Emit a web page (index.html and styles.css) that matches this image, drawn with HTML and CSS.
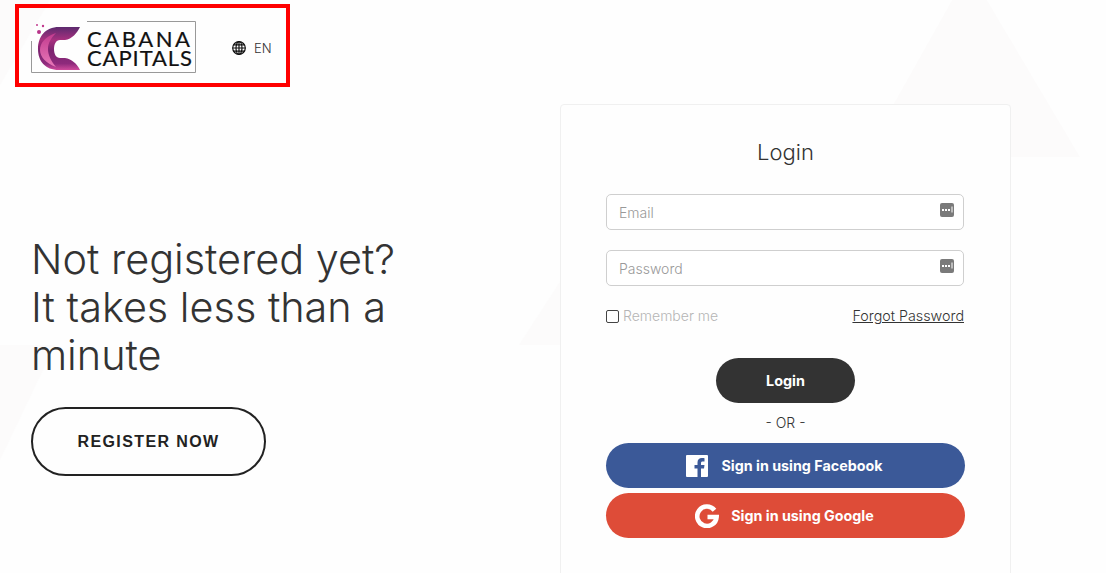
FILE: index.html
```html
<!DOCTYPE html>
<html lang="en">
<head>
    <meta charset="UTF-8">
    <meta name="viewport" content="width=device-width, initial-scale=1.0">
    <title>Login</title>
    <link rel="stylesheet" href="styles.css">
</head>
<body>
    <!-- faint background triangles -->
    <svg class="bg-shapes" width="1106" height="573" viewBox="0 0 1106 573" aria-hidden="true">
        <polygon points="969,-30 1080,157 864,157"></polygon>
        <polygon points="519,345 600,220 600,345"></polygon>
        <polygon points="0,345 55,345 0,460"></polygon>
        <polygon points="0,0 50,0 0,85"></polygon>
    </svg>

    <header class="top-box">
        <a href="#" class="logo">
            <svg width="165" height="52" viewBox="0 0 165 52">
                <defs>
                    <linearGradient id="logoFill" x1="0" y1="0" x2="0" y2="1">
                        <stop offset="0" stop-color="#5c2a6e"></stop>
                        <stop offset="0.3" stop-color="#a8307f"></stop>
                        <stop offset="0.55" stop-color="#7c2470"></stop>
                        <stop offset="0.85" stop-color="#8e2a7c"></stop>
                        <stop offset="1" stop-color="#d04a9c"></stop>
                    </linearGradient>
                    <linearGradient id="logoShine" x1="0" y1="0" x2="0" y2="1">
                        <stop offset="0" stop-color="#c23a8e"></stop>
                        <stop offset="1" stop-color="#e878b8"></stop>
                    </linearGradient>
                </defs>
                <path class="logo-frame" d="M56 .5H164.5V51.5H.5V20"></path>
                <circle cx="6" cy="4" r="1" fill="#c23a8e"></circle>
                <circle cx="12" cy="5" r="1.2" fill="#c23a8e"></circle>
                <circle cx="8" cy="11" r="2" fill="#b8348a"></circle>
                <path fill="url(#logoFill)" d="M49 6H28C14 6 7 16 7 28C7 40 14 49 28 49H49C46 43 41 38 34 37H29C25 37 23 33 23 28C23 23 25 19 29 19H34C41 18 46 12 49 6Z"></path>
                <path fill="url(#logoShine)" d="M25 12C14 16 9 22 9 29C9 36 15 42 25 46C20 40 17 34 17 28C17 22 20 17 25 12Z"></path>
                <text class="logo-text" x="56" y="26" textLength="103">CABANA</text>
                <text class="logo-text" x="56" y="45" textLength="105">CAPITALS</text>
            </svg>
        </a>
        <a href="#" class="lang">
            <svg width="14" height="14" viewBox="0 0 14 14" fill="none" stroke="#111" stroke-width="1.2">
                <circle cx="7" cy="7" r="6.3"></circle>
                <ellipse cx="7" cy="7" rx="3" ry="6.3"></ellipse>
                <path d="M7 .7V13.3M.7 7H13.3M1.6 3.800H12.400M1.600 10.200H12.400"></path>
            </svg>
            <span>EN</span>
        </a>
    </header>

    <main class="content">
        <section class="intro">
            <h1>Not registered yet?<br>It takes less than a<br>minute</h1>
            <a href="#" class="register-btn">REGISTER NOW</a>
        </section>

        <section class="card">
            <h2>Login</h2>
            <form class="login-form">
                <div class="field">
                    <input type="text" placeholder="Email">
                    <svg class="field-icon" width="14" height="14" viewBox="0 0 14 14">
                        <rect width="14" height="14" rx="2" fill="#7a7a7a"></rect>
                        <path d="M2 6h2v2H2zM5 6h2v2H5zM8 6h2v2H8z" fill="#fff"></path>
                        <path d="M12 3.5v6" stroke="#fff" stroke-width="1"></path>
                    </svg>
                </div>
                <div class="field">
                    <input type="password" placeholder="Password">
                    <svg class="field-icon" width="14" height="14" viewBox="0 0 14 14">
                        <rect width="14" height="14" rx="2" fill="#7a7a7a"></rect>
                        <path d="M2 6h2v2H2zM5 6h2v2H5zM8 6h2v2H8z" fill="#fff"></path>
                        <path d="M12 3.5v6" stroke="#fff" stroke-width="1"></path>
                    </svg>
                </div>
                <div class="form-row">
                    <label class="remember"><span class="check"></span>Remember me</label>
                    <a href="#" class="forgot">Forgot Password</a>
                </div>
                <button type="button" class="login-btn">Login</button>
                <p class="or">- OR -</p>
                <a href="#" class="social facebook">
                    <svg width="22" height="22" viewBox="0 0 22 22">
                        <path fill="#fff" d="M1 0H21A1 1 0 0 1 22 1V21A1 1 0 0 1 21 22H15V13.5H18L18.5 10H15V8C15 7 15.5 6.4 16.700 6.400H18.500V3.200C18 3.100 17 3 15.800 3C13.200 3 11.500 4.600 11.500 7.500V10H8.500V13.500H11.500V22H1A1 1 0 0 1 0 21V1A1 1 0 0 1 1 0Z"></path>
                    </svg>
                    <span>Sign in using Facebook</span>
                </a>
                <a href="#" class="social google">
                    <svg width="24" height="24" viewBox="0 0 24 24">
                        <path fill="none" stroke="#fff" stroke-width="4.6" d="M19.500 6.200A9.700 9.700 0 1 0 21.600 13H12.500"></path>
                    </svg>
                    <span>Sign in using Google</span>
                </a>
            </form>
        </section>
    </main>
</body>
</html>
```

FILE: styles.css
```css
html, body {
    height: 100%;
    overflow: hidden;
}
body {
    margin: 0;
    padding: 0;
    background-color: #FEFEFE;
    font-family: Inter, sans-serif;
    color: #333;
}
a {
    color: inherit;
    text-decoration: none;
}
.bg-shapes {
    position: absolute;
    top: 0;
    left: 0;
    fill: #FCFBFB;
}
.top-box {
    position: relative;
    box-sizing: border-box;
    width: 275px;
    height: 83px;
    margin: 4px 0 0 15px;
    border: 4px solid #FF0000;
    padding: 13px 0 0 12px;
    display: flex;
    gap: 36px;
}
.logo {
    display: block;
    height: 52px;
}
.logo-frame {
    fill: none;
    stroke: #999;
    stroke-width: 1;
}
.logo-text {
    font-family: Lato, sans-serif;
    font-size: 22px;
    fill: #111;
    stroke: #111;
    stroke-width: 0.2;
}
.lang {
    display: flex;
    align-items: center;
    gap: 8px;
    height: 52px;
    margin-top: 1px;
    font-size: 13px;
    font-weight: 300;
}
.content {
    position: relative;
    display: flex;
    margin-top: 17px;
}
.intro {
    width: 560px;
    box-sizing: border-box;
    padding: 131px 0 0 31px;
}
.intro h1 {
    margin: 0 0 28px;
    font-family: Inter, sans-serif;
    font-size: 41.4px;
    line-height: 48px;
    font-weight: 300;
    color: #333;
}
.register-btn {
    display: flex;
    align-items: center;
    justify-content: center;
    box-sizing: border-box;
    width: 235px;
    height: 69px;
    border: 2px solid #222;
    border-radius: 35px;
    font-family: "Liberation Sans", Arial, sans-serif;
    font-size: 16px;
    font-weight: bold;
    letter-spacing: 1.4px;
    color: #222;
}
.card {
    box-sizing: border-box;
    width: 451px;
    height: 520px;
    border: 1px solid #F0F0F0;
    border-radius: 4px;
    background-color: #FEFEFE;
    padding: 32px 45px 0;
}
.card h2 {
    margin: 0 0 27px;
    text-align: center;
    font-size: 22px;
    line-height: 30px;
    font-weight: 300;
}
.login-form {
    display: flex;
    flex-direction: column;
}
.field {
    position: relative;
    margin-bottom: 20px;
    width: 358px;
}
.field input {
    display: block;
    box-sizing: border-box;
    width: 100%;
    height: 36px;
    border: 1px solid #CFCFCF;
    border-radius: 5px;
    background: #FFF;
    padding: 0 12px;
    font-family: Inter, sans-serif;
    font-size: 14px;
}
.field input::placeholder {
    color: #999;
    font-weight: 300;
}
.field-icon {
    position: absolute;
    top: 9px;
    right: 10px;
}
.form-row {
    display: flex;
    justify-content: space-between;
    align-items: center;
    width: 358px;
    height: 20px;
    margin: -1px 0 33px;
    font-size: 14px;
    font-weight: 300;
}
.remember {
    display: flex;
    align-items: center;
    gap: 4px;
    color: #B5B5B5;
}
.check {
    box-sizing: border-box;
    width: 13px;
    height: 13px;
    margin-top: 3px;
    border: 1px solid #444;
    border-radius: 2px;
    background: #FFF;
}
.forgot {
    font-size: 14.3px;
    text-decoration: underline;
}
.login-btn {
    align-self: center;
    width: 139px;
    height: 45px;
    border: none;
    border-radius: 23px;
    background-color: #333;
    color: white;
    font-family: Inter, sans-serif;
    font-size: 14.4px;
    font-weight: bold;
}
.or {
    margin: 11px 0 12px;
    text-align: center;
    font-size: 14px;
    line-height: 17px;
    font-weight: 300;
}
.social {
    display: flex;
    align-items: center;
    justify-content: center;
    gap: 13px;
    box-sizing: border-box;
    width: 359px;
    height: 45px;
    margin-bottom: 5px;
    padding-right: 2px;
    border-radius: 23px;
    color: white;
    font-size: 14.3px;
    font-weight: bold;
}
.facebook {
    background-color: #3B5998;
}
.google {
    gap: 12px;
    background-color: #DE4C38;
}
```
